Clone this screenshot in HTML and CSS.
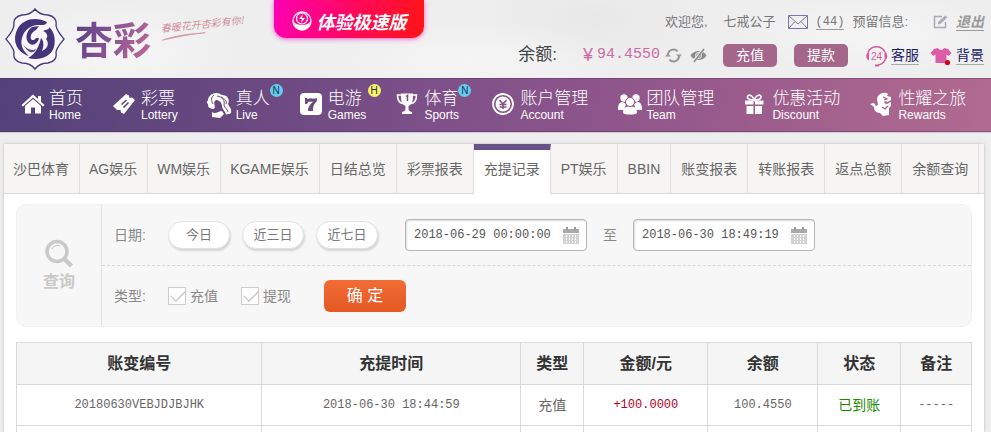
FILE: index.html
```html
<!DOCTYPE html>
<html lang="zh-CN">
<head>
<meta charset="utf-8">
<meta name="viewport" content="width=device-width, initial-scale=1">
<title>充提记录</title>
<link rel="stylesheet" href="styles.css">
</head>
<body>
<header class="header">
  <a class="logo" href="#">
    <svg class="emblem" viewBox="0 0 60 62" width="60" height="62">
      <path d="M30 1C33 5 38 7 43 7C49 8 52 12 51 17C51 22 55 26 59 31C55 36 51 40 51 45C52 50 49 54 43 55C38 55 33 57 30 61C27 57 22 55 17 55C11 54 8 50 9 45C9 40 5 36 1 31C5 26 9 22 9 17C8 12 11 8 17 7C22 7 27 5 30 1Z" fill="#f8f6fa" stroke="#44357a" stroke-width="1.3"/>
      <path d="M42 14C31 8 18 11 13 20C7 30 10 44 24 48C18 43 15 37 17 30C19 22 25 18 32 17C36 17 41 18 42 14Z" fill="#44357a"/>
      <path d="M23 50C34 53 46 49 49 39C51 31 49 23 44 19C45 22 41 21 38 23C43 25 43 29 41 31C45 36 42 41 37 43C39 38 39 33 36 30C34 38 31 46 23 50Z" fill="#44357a"/>
      <path d="M27 19L34 18L31 22C27 24 25 27 26 31C27 33 30 32 31 30L34 30C33 35 29 38 25 36C20 33 20 24 27 19Z" fill="#44357a"/>
      <path d="M18 36C22 42 27 43 31 41C29 46 23 46 18 36Z" fill="#5b4b8b"/>
    </svg>
    <span class="brand">杏彩</span>
    <span class="slogan">春暖花开杏彩有你!
      <svg class="swoosh" viewBox="0 0 44 6" width="44" height="6"><path d="M0 5C12 2 28 1 44 2C28 2 14 3 0 5Z" fill="#d3a0aa" stroke="#d3a0aa"/></svg>
    </span>
  </a>
  <a class="promo" href="#">
    <svg viewBox="0 0 20 20" width="20" height="20"><circle cx="10" cy="10" r="9" fill="none" stroke="#fff" stroke-width="1.3"/><circle cx="10" cy="7.500" r="5.500" fill="none" stroke="#fff" stroke-width="1.200"/><path d="M2 11C5 15 15 15 18 11C18 16 14 19 10 19S2 16 2 11Z" fill="#fff"/><path d="M11 3L7 8H10L9 12L13 7H10Z" fill="#fff"/></svg>
    <span>体验极速版</span>
  </a>
  <div class="account">
    <div class="welcome">
      <span class="hello">欢迎您,</span>
      <span class="user">七戒公子</span>
      <a class="mail" href="#" aria-label="站内信">
        <svg viewBox="0 0 20 14" width="20" height="14" fill="none" stroke="#7c76a4"><path d="M.5.5H19.500V13.500H.5ZM.5.5L10 9L19.500.5M.5 13.500L7 6.500M19.500 13.500L13 6.500"/></svg>
        <span class="count">(44)</span>
      </a>
      <span class="reserved">预留信息:</span>
      <a class="edit" href="#" aria-label="编辑">
        <svg viewBox="0 0 15 14" width="15" height="14" fill="none" stroke="#a9a9b8" stroke-width="1.500"><path d="M9 1.500H1.500V12.500H12.500V7"/><path d="M5 9L6 6.500L12.500.8L14 2.500L7.500 8.500Z" fill="#a9a9b8" stroke-width=".6"/></svg>
      </a>
      <a class="logout" href="#">退出</a>
    </div>
    <div class="wallet">
      <span class="balance-label">余额:</span>
      <span class="balance">¥<span class="balance-num">94.4550</span></span>
      <button class="icon-btn" aria-label="刷新"><svg viewBox="0 0 17 15" width="17" height="15" fill="none" stroke="#969696" stroke-width="2"><path d="M3 7A5.500 5.500 0 0 1 12.500 3.200M14 8A5.500 5.500 0 0 1 4.500 11.800"/><path d="M11 6.500H17L14.200 9.500ZM0 8.500H6L2.800 5.500Z" fill="#969696" stroke="none"/></svg></button>
      <button class="icon-btn eye" aria-label="隐藏余额"><svg viewBox="0 0 17 15" width="17" height="15"><path d="M.5 7.500C4 1.500 13 1.500 16.500 7.500C13 13.500 4 13.500.5 7.500Z" fill="#8c8c8c"/><circle cx="8.500" cy="7.500" r="3" fill="none" stroke="#eee"/><path d="M14 .5L3 14.500" stroke="#eee" stroke-width="3"/><path d="M14 1L4 14" stroke="#8c8c8c" stroke-width="1.600"/></svg></button>
      <button class="cash">充值</button>
      <button class="cash">提款</button>
      <a class="tool" href="#">
        <svg viewBox="0 0 23 23" width="23" height="23" fill="none" stroke="#d45a9c"><path d="M3 8A9.500 9.500 0 0 1 20 8M20 16A9 9 0 0 1 13 21" stroke-width="1.600"/><path d="M4 7.500A5 5 0 0 0 4 16.500ZM19.500 7.500A5 5 0 0 1 19.500 16.500Z" fill="#d45a9c" stroke="none"/><path d="M10 21.500H14" stroke-width="2"/><text x="11.500" y="15.500" text-anchor="middle" font-size="10" fill="#d45a9c" stroke="none">24</text></svg>
        <span>客服</span>
      </a>
      <a class="tool" href="#">
        <svg viewBox="0 0 23 23" width="23" height="23"><path d="M8 4C9 6.500 13 6.500 14 4L18 5L21.500 9L18.500 12L16.500 10.500V19H5.500V10.500L3.500 12L.5 9L4 5Z" fill="#dc5da6"/><circle cx="17.500" cy="18.500" r="2.600" fill="#d0021b"/></svg>
        <span>背景</span>
      </a>
    </div>
  </div>
</header>

<nav class="nav">
  <a class="nav-item" href="#">
    <svg viewBox="0 0 24 24" width="24" height="24"><path d="M12 2.500L.5 13L2 14.500L12 5.500L22 14.500L23.500 13L20 9.700V4H17V7Z"/><path d="M4 14L12 7L20 14V21.500H14V15.500H10V21.500H4Z"/></svg>
    <span class="nav-text"><span class="zh">首页</span><span class="en">Home</span></span>
  </a>
  <a class="nav-item" href="#">
    <svg viewBox="0 0 24 24" width="24" height="24"><path d="M13 2L16 3.500L16.500 6L19 5.500L22 8L11 22L8 20.500L7.500 18L4 18L0 14Z"/><path d="M8.500 12.500L13.500 8M10.500 15.500L15.500 10.500" stroke="#5f4780" stroke-width="1.600"/></svg>
    <span class="nav-text"><span class="zh">彩票</span><span class="en">Lottery</span></span>
  </a>
  <a class="nav-item live" href="#">
    <svg viewBox="0 0 26 26" width="26" height="26"><path d="M2 7C4 1 11-1 16 3C22 3 24 8 22 12C23 15 26 16 25 21C23 23 21 21 20 23C20 20 17 18 16 15C16 10 13 8 10 8C8 9 8 12 9 15C8 18 6 17 4 16C1 15 3 12 1 11C0 9 3 9 2 7Z"/><path d="M11 4C17 5 19 9 18 13C19 17 22 17 22 20M8 3C5 5 5 9 7 12M15 5C19 7 21 9 20 12" fill="none" stroke="#67487f" stroke-width="1"/><path d="M6 20C9 23 13 19 16 19L18 22L14 26L6 25Z"/></svg>
    <span class="nav-text"><span class="zh">真人</span><span class="en">Live</span><i class="badge">N</i></span>
  </a>
  <a class="nav-item" href="#">
    <svg viewBox="0 0 24 24" width="24" height="24"><rect x="0" y="1" width="22" height="22" rx="4"/><path d="M5 6H7L8 7C11 5 13 8 17 6V9C14 12 13 14 13 19H8C8 14 11 12 13 9.500C10 10 8 9 7 12H5Z" fill="#70497f"/></svg>
    <span class="nav-text"><span class="zh">电游</span><span class="en">Games</span><i class="badge hot">H</i></span>
  </a>
  <a class="nav-item" href="#">
    <svg viewBox="0 0 24 24" width="24" height="24"><path d="M5 1.500H17V5C17 10 15 13 12.500 14V17C12.500 19 14 19 16 20V22H6V20C8 19 9.500 19 9.500 17V14C7 13 5 10 5 5Z"/><path d="M5 3H1.500C1.500 8 3.500 11 7 11.500M17 3H20.500C20.500 8 18.500 11 15 11.500" fill="none" stroke="#fff" stroke-width="1.600"/><path d="M10 4.500L11.500 3.500V9" fill="none" stroke="#7a4d86" stroke-width="1.500"/></svg>
    <span class="nav-text"><span class="zh">体育</span><span class="en">Sports</span><i class="badge">N</i></span>
  </a>
  <a class="nav-item" href="#">
    <svg viewBox="0 0 24 24" width="24" height="24"><circle cx="11" cy="12" r="10" fill="none" stroke="#fff" stroke-width="1.800"/><circle cx="11" cy="12" r="7.500"/><path d="M7.500 8L11 12L14.500 8M11 12V17M7.500 12.500H14.500M7.500 15H14.500" fill="none" stroke="#84528a" stroke-width="1.600"/></svg>
    <span class="nav-text"><span class="zh">账户管理</span><span class="en">Account</span></span>
  </a>
  <a class="nav-item" href="#">
    <svg viewBox="0 0 24 24" width="24" height="24"><circle cx="6" cy="6" r="3.700"/><circle cx="18" cy="6" r="3.700"/><path d="M0 18C0 11 2 10 5 10L8 12L6 18ZM24 18C24 11 22 10 19 10L16 12L18 18Z"/><path d="M5 21C5 16 7 14.500 12 14.500S19 16 19 21C17 23 7 23 5 21Z"/><circle cx="12" cy="10" r="4.500" stroke="#8d568c"/></svg>
    <span class="nav-text"><span class="zh">团队管理</span><span class="en">Team</span></span>
  </a>
  <a class="nav-item" href="#">
    <svg viewBox="0 0 24 24" width="24" height="24"><path d="M1 8.500H9.500V12.500H1ZM11 8.500H19.500V12.500H11ZM2.500 14H9.500V22H2.500ZM11 14H18V22H11Z"/><path d="M10.200 8C8 2 3 2 3.500 5.500C4 7.500 7 8 10.200 8C13.500 8 16.500 7.500 17 5.500C17.500 2 12.500 2 10.200 8Z" fill="none" stroke="#fff" stroke-width="1.600"/></svg>
    <span class="nav-text"><span class="zh">优惠活动</span><span class="en">Discount</span></span>
  </a>
  <a class="nav-item" href="#">
    <svg viewBox="0 0 24 24" width="24" height="24"><path d="M0 12L4 11L6 14L8 13C8 10 6 7 8 4C11 0 16 0 18 2L17 4L21 5L21 8L18 10L15 9L14 11L17 12L21 10L21 14L19 16V23L13 24L10 21C6 21 4 18 4 15Z"/><path d="M12 15L15 17L18 14M13 5L17 7L14 8" fill="none" stroke="#a6638d" stroke-width="1.300"/></svg>
    <span class="nav-text"><span class="zh">性耀之旅</span><span class="en">Rewards</span></span>
  </a>
</nav>

<main class="panel">
  <div class="tabs">
    <a class="tab" href="#">沙巴体育</a><a class="tab" href="#">AG娱乐</a><a class="tab" href="#">WM娱乐</a><a class="tab" href="#">KGAME娱乐</a><a class="tab" href="#">日结总览</a><a class="tab" href="#">彩票报表</a><a class="tab active" href="#" aria-current="page">充提记录</a><a class="tab" href="#">PT娱乐</a><a class="tab" href="#">BBIN</a><a class="tab" href="#">账变报表</a><a class="tab" href="#">转账报表</a><a class="tab" href="#">返点总额</a><a class="tab" href="#">余额查询</a>
  </div>

  <form class="filter">
    <div class="filter-title">
      <svg viewBox="0 0 30 30" width="30" height="30" fill="none" stroke="#c9c9c9"><circle cx="13" cy="12.500" r="10" stroke-width="3.500"/><path d="M8 10C9 7 13 5.500 16 7" stroke-width="1.200"/><path d="M20.500 20L27.500 27" stroke-width="4.500"/></svg>
      <span>查询</span>
    </div>
    <div class="filter-rows">
      <div class="filter-row dates">
        <label class="field-name" for="from">日期:</label>
        <div class="pills">
          <button type="button" class="pill">今日</button>
          <button type="button" class="pill">近三日</button>
          <button type="button" class="pill">近七日</button>
        </div>
        <div class="date-box">
          <input id="from" type="text" value="2018-06-29 00:00:00">
          <svg viewBox="0 0 16 17" width="16" height="17"><path d="M0 2H16V6H0Z" fill="#aaa"/><path d="M3 0H5V3H3ZM11 0H13V3H11Z" fill="#999"/><path d="M0 7H16V17H0Z" fill="#d2d2d2"/><path d="M3.500 8V16M6.500 8V16M9.500 8V16M12.500 8V16" stroke="#fff" stroke-dasharray="2 1"/></svg>
        </div>
        <label class="to" for="until">至</label>
        <div class="date-box">
          <input id="until" type="text" value="2018-06-30 18:49:19">
          <svg viewBox="0 0 16 17" width="16" height="17"><path d="M0 2H16V6H0Z" fill="#aaa"/><path d="M3 0H5V3H3ZM11 0H13V3H11Z" fill="#999"/><path d="M0 7H16V17H0Z" fill="#d2d2d2"/><path d="M3.500 8V16M6.500 8V16M9.500 8V16M12.500 8V16" stroke="#fff" stroke-dasharray="2 1"/></svg>
        </div>
      </div>
      <div class="filter-row types">
        <span class="field-name">类型:</span>
        <label class="check"><input type="checkbox" checked>充值</label>
        <label class="check"><input type="checkbox" checked>提现</label>
        <button type="submit" class="submit">确 定</button>
      </div>
    </div>
  </form>

  <table class="records">
    <colgroup><col class="c-id"><col class="c-time"><col class="c-type"><col class="c-amount"><col class="c-balance"><col class="c-state"><col class="c-note"></colgroup>
    <thead>
      <tr><th>账变编号</th><th>充提时间</th><th>类型</th><th>金额/元</th><th>余额</th><th>状态</th><th>备注</th></tr>
    </thead>
    <tbody>
      <tr><td class="num">20180630VEBJDJBJHK</td><td class="num">2018-06-30 18:44:59</td><td>充值</td><td class="num plus">+100.0000</td><td class="num">100.4550</td><td class="done">已到账</td><td class="num">-----</td></tr>
      <tr><td></td><td></td><td></td><td></td><td></td><td></td><td></td></tr>
    </tbody>
  </table>
</main>
</body>
</html>
```
FILE: styles.css
```css
* { box-sizing: border-box; }

body {
  display: flex;
  flex-direction: column;
  margin: 0;
  height: 100vh;
  overflow: hidden;
  font: 14px/20px "Liberation Sans", "Noto Sans CJK SC", sans-serif;
  color: #666;
  background:
    radial-gradient(ellipse 120px 50px at 12% 12%, #f6f6f6, transparent),
    radial-gradient(ellipse 160px 40px at 47% 14%, #f5f5f5, transparent),
    radial-gradient(ellipse 120px 50px at 60% 4%, #e8e8e9, transparent),
    radial-gradient(ellipse 140px 40px at 88% 8%, #f5f5f5, transparent),
    #eeeeef;
}

a { color: inherit; text-decoration: none; }
button { font: inherit; border: 0; padding: 0; cursor: pointer; }
svg { display: block; flex: none; }

/* header */
.header { display: flex; flex: none; height: 78px; }
.logo { display: flex; width: 274px; flex: none; padding: 8px 0 0 5px; }
.brand {
  margin: 0 0 0 10px;
  font: 700 38px/60px "Noto Sans CJK SC", sans-serif;
  color: transparent;
  background: linear-gradient(110deg, #5c4288 10%, #8d5494 50%, #c06c98);
  background-clip: text;
  -webkit-background-clip: text;
  align-self: flex-start;
}
.slogan {
  margin: 10px 0 0 10px;
  font: italic 10px/12px "Noto Sans CJK SC", sans-serif;
  color: #cf8f9c;
  white-space: nowrap;
  transform: rotate(-6deg);
  align-self: flex-start;
}
.swoosh { margin-top: 1px; }
.promo {
  display: flex;
  flex: none;
  align-items: center;
  justify-content: center;
  gap: 5px;
  width: 150px;
  height: 38px;
  padding-top: 4px;
  border-radius: 0 0 12px 12px;
  color: #fff;
  font: italic 700 18px/24px "Noto Sans CJK SC", sans-serif;
  background: linear-gradient(100deg, #ff00b4, #ff0a50 60%, #ff1414);
  box-shadow: 0 1px 5px #ff5cc8;
}
.account { flex: 1; padding: 11px 7px 0 0; white-space: nowrap; }
.welcome, .wallet { display: flex; align-items: center; justify-content: flex-end; }
.welcome { height: 22px; font-size: 13px; color: #777; }
.hello { margin-right: 16px; }
.user { margin-right: 12px; }
.mail { display: flex; align-items: center; gap: 8px; margin-right: 8px; }
.count { font: 12px/14px "Liberation Mono", monospace; border-bottom: 1px solid #999; }
.reserved { margin-right: 25px; }
.edit { margin-right: 8px; }
.logout { font-size: 14px; font-style: italic; font-weight: 700; line-height: 16px; color: #999; border-bottom: 1px solid #999; }
.wallet { height: 44px; }
.balance-label { font-size: 17px; color: #444; margin-right: 26px; }
.balance { display: flex; align-items: center; gap: 4px; margin-right: 5px; font-size: 18px; font-weight: 300; color: #cd6ca4; }
.balance-num { font: 15px/20px "Liberation Mono", monospace; }
.icon-btn { background: none; margin-right: 8px; }
.eye { margin-right: 16px; }
.cash { width: 54px; height: 23px; margin-right: 17px; border-radius: 5px; background: #a5668c; color: #fff; line-height: 22px; }
.tool { display: flex; align-items: center; gap: 3px; color: #1c1c66; }
.tool + .tool { margin-left: 11px; }
.tool span { line-height: 18px; border-bottom: 1px solid #aaa; }
.tool text { font-family: "Liberation Sans", sans-serif; }

/* main navigation */
.nav {
  display: flex;
  flex: none;
  gap: 30px;
  height: 54px;
  padding: 10px 0 0 21px;
  color: #fff;
  white-space: nowrap;
  background: linear-gradient(98deg, #53427a, #67487f 22%, #82518a 48%, #985a8c 72%, #b26b90);
  box-shadow: inset 0 -1px 0 rgba(60, 30, 80, .35), inset 0 1px 0 rgba(60, 30, 80, .3), 0 1px 1px #d5d0d8;
}
.nav-item { display: flex; flex: none; align-items: flex-start; }
.nav-item svg { width: 24px; height: 24px; margin: 4px 4px 0 0; fill: #fff; }
.nav-item.live svg { width: 26px; height: 26px; margin-left: -2px; }
.nav-text { position: relative; display: flex; flex-direction: column; }
.nav-item:nth-child(n + 4) .nav-text { min-width: 38px; }
.zh { font-size: 17px; line-height: 21px; font-weight: 300; }
.en { font-size: 12px; line-height: 12px; }
.badge {
  position: absolute;
  left: 34px;
  top: -4px;
  width: 13px;
  height: 13px;
  border-radius: 50%;
  background: #62cdf0;
  color: #234;
  font: 10px/13px "Liberation Sans", sans-serif;
  text-align: center;
}
.hot { left: 40px; background: #fbf36a; }

/* content panel */
.panel { flex: 1; min-height: 0; overflow: hidden; margin: 12px 7px 0 4px; background: #fff; box-shadow: 0 0 3px #bbb; }
.tabs { display: flex; height: 50px; background: #f6f5f4; border-bottom: 1px solid #d8d8d8; white-space: nowrap; }
.tab { padding: 0 10px 0 9px; line-height: 50px; border-right: 1px solid #dfdfdf; }
.tab:nth-child(n + 5) { padding-left: 10px; }
.active { height: 50px; border-top: 6px solid #69528a; background: #fff; line-height: 38px; }

.filter { display: flex; margin: 10px 12px 15px; background: #f7f7f7; border: 1px solid #f1f1f1; border-radius: 10px; color: #888; }
.filter-title {
  display: flex;
  flex-direction: column;
  align-items: center;
  justify-content: center;
  gap: 3px;
  width: 85px;
  border-right: 1px solid #e2e2e2;
  font-size: 16px;
  font-weight: 700;
  color: #c9c9c9;
}
.filter-rows { flex: 1; }
.filter-row { display: flex; align-items: center; height: 61px; padding-left: 12px; }
.types { height: 60px; }
.dates { border-bottom: 1px dashed #d8d8d8; }
.field-name { width: 54px; }
.pills { display: flex; gap: 12px; margin-right: 27px; }
.pill { width: 62px; height: 28px; border: 1px solid #e2e2e2; border-radius: 14px; background: #fff; box-shadow: 1px 2px 2px #d4d4d4; color: #777; font-size: 13px; }
.date-box { display: flex; align-items: center; width: 182px; height: 32px; padding: 0 7px 0 8px; border: 1px solid #b5b5b5; border-radius: 4px; background: #fff; box-shadow: inset 1px 1px 2px #ddd; }
.date-box input { flex: 1; min-width: 0; border: 0; padding: 0; background: none; color: #555; font: 12px/20px "Liberation Mono", monospace; }
.to { width: 46px; text-align: center; }
.check { display: flex; align-items: center; gap: 4px; margin-right: 23px; }
.check input { appearance: none; display: grid; width: 18px; height: 18px; margin: 0; border: 1px solid #ccc; background: #fff; overflow: hidden; }
.check input:checked::before { content: ""; width: 13px; height: 7px; margin: 2px 0 0 2px; border: solid #bbb; border-width: 0 0 1px 1px; transform: rotate(-45deg); }
.submit { width: 82px; height: 32px; margin-left: 10px; border-radius: 6px; background: linear-gradient(#f26c36, #e35a22); color: #fff; font-size: 16px; }

/* records table */
.records { width: calc(100% - 24px); margin: 0 12px; border-collapse: collapse; table-layout: fixed; text-align: center; }
.records th, .records td { border: 1px solid #d9d9d9; padding: 0; }
.records th { height: 42px; background: #f5f5f5; font-size: 16px; color: #333; }
.records td { height: 41px; }
.records .num { font: 12px/20px "Liberation Mono", monospace; }
.records .plus { color: #b3001b; }
.records .done { color: #1c8a00; }
.c-id { width: 25.7%; }
.c-time { width: 27.1%; }
.c-type { width: 6.6%; }
.c-amount { width: 13%; }
.c-balance { width: 11.5%; }
.c-state { width: 8.7%; }
.c-note { width: 7.4%; }
```
